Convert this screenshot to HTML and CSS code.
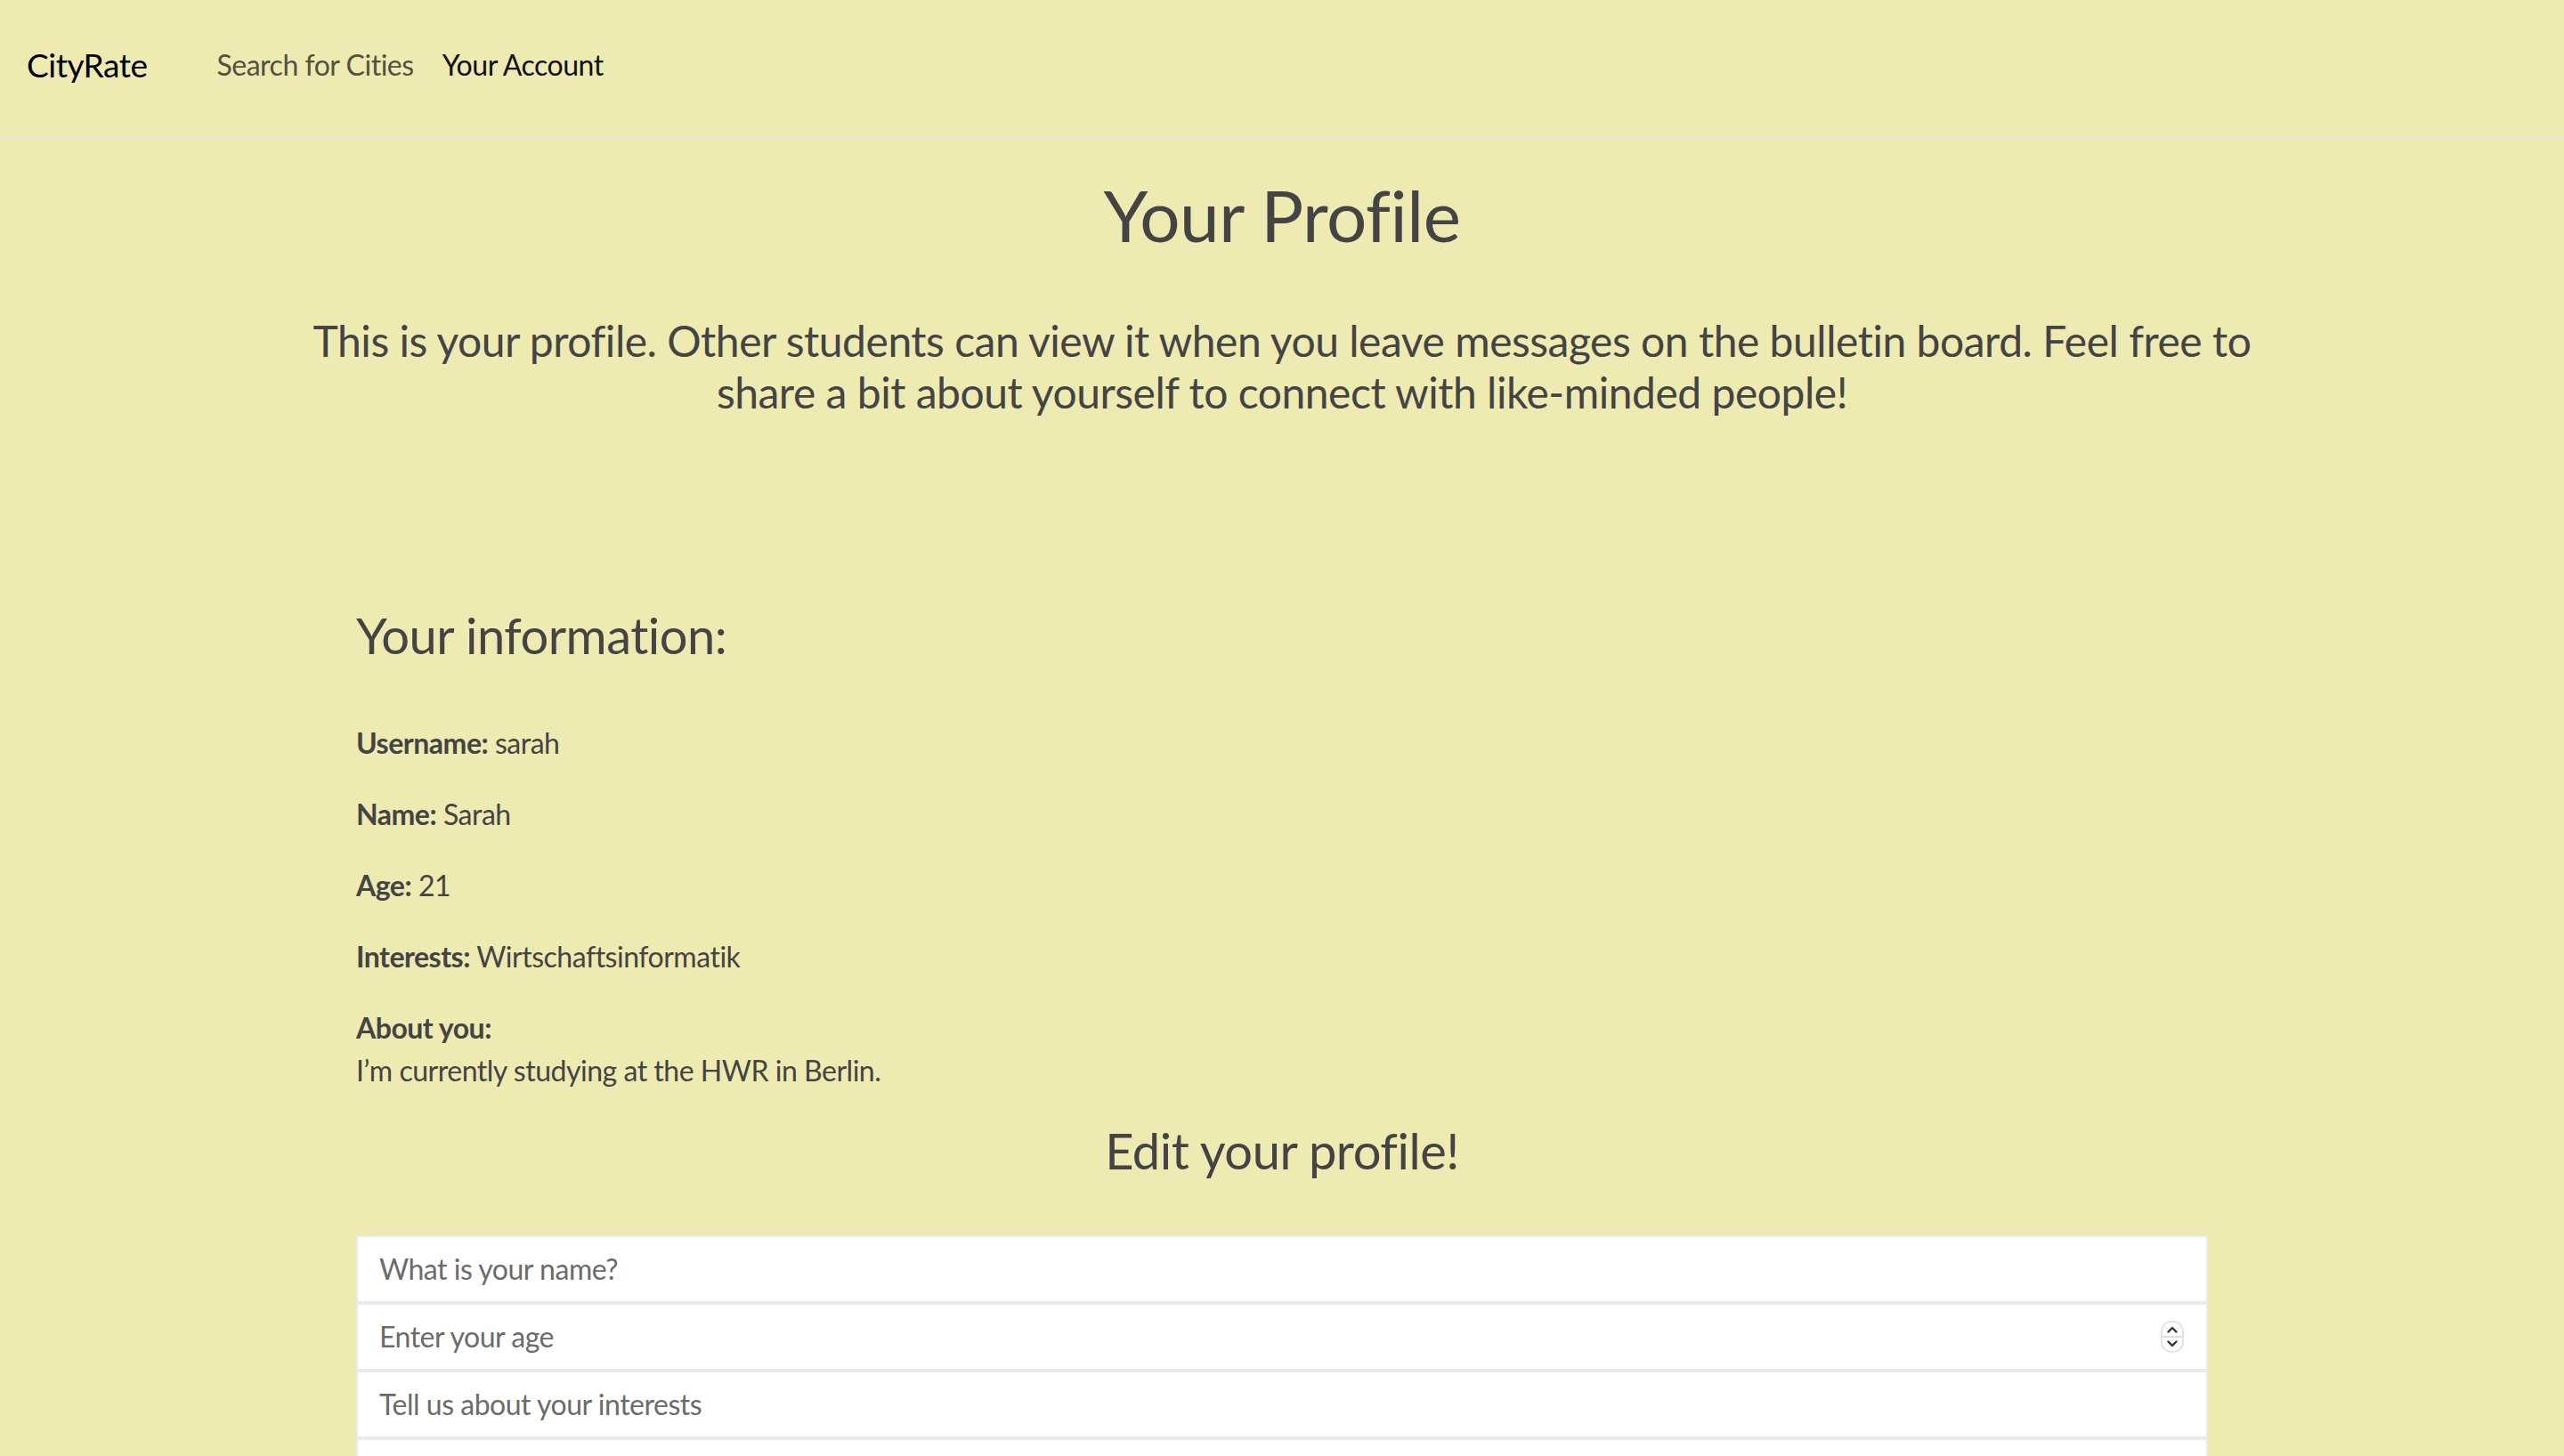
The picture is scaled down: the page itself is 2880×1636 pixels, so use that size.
FILE: index.html
```html
<!DOCTYPE html>
<html lang="en">
<head>
<meta charset="utf-8">
<title>CityRate – Your Profile</title>
<link rel="stylesheet" href="styles.css">
</head>
<body>
<nav class="navbar">
  <a class="brand" href="#">CityRate</a>
  <ul class="nav-links">
    <li><a class="nav-link" href="#">Search for Cities</a></li>
    <li><a class="nav-link active" href="#">Your Account</a></li>
  </ul>
</nav>

<main>
  <section class="intro">
    <h1 class="title">Your Profile</h1>
    <p class="lead">This is your profile. Other students can view it when you leave messages on the bulletin board. Feel free to share a bit about yourself to connect with like-minded people!</p>
  </section>

  <section class="content">
    <h3 class="section-title">Your information:</h3>
    <p class="info"><b>Username:</b> sarah</p>
    <p class="info"><b>Name:</b> Sarah</p>
    <p class="info"><b>Age:</b> 21</p>
    <p class="info"><b>Interests:</b> Wirtschaftsinformatik</p>
    <p class="info"><b>About you:</b><br>I’m currently studying at the HWR in Berlin.</p>

    <h3 class="section-title center">Edit your profile!</h3>

    <form class="edit-form">
      <input class="field" type="text" placeholder="What is your name?">
      <div class="number-wrap">
        <input class="field" type="number" placeholder="Enter your age">
        <svg class="spinner" width="26" height="36" viewBox="0 0 26 36" aria-hidden="true">
          <rect x="1" y="1" width="24" height="34" rx="11" fill="#fff" stroke="#dcdcdc" stroke-width="1.5"/>
          <line x1="1.5" y1="18" x2="24.5" y2="18" stroke="#d6d6d6" stroke-width="1.5"/>
          <path d="M8.5 12.5 L13 8 L17.5 12.5" fill="none" stroke="#333" stroke-width="2.4" stroke-linecap="round" stroke-linejoin="round"/>
          <path d="M8.5 23.5 L13 28 L17.5 23.5" fill="none" stroke="#333" stroke-width="2.4" stroke-linecap="round" stroke-linejoin="round"/>
        </svg>
      </div>
      <input class="field" type="text" placeholder="Tell us about your interests">
      <textarea class="field" rows="3" placeholder="Tell us something about yourself"></textarea>
    </form>
  </section>
</main>
</body>
</html>
```

FILE: styles.css
```css
* {
  box-sizing: border-box;
}

html, body {
  margin: 0;
  padding: 0;
}

body {
  background: #edeab2;
  font-family: Lato, "Liberation Sans", sans-serif;
  font-size: 32px;
  line-height: 1.5;
  letter-spacing: -0.015em;
  color: #444444;
}

/* ---------- navbar ---------- */
.navbar {
  height: 155px;
  display: flex;
  align-items: center;
  padding: 0 0 8px 30px;
  border-bottom: 2px solid #e6e6df;
}

.brand {
  font-size: 37px;
  line-height: 1.5;
  color: #000;
  text-decoration: none;
  margin-right: 62px;
}

.nav-links {
  list-style: none;
  display: flex;
  margin: 0;
  padding: 0;
}

.nav-link {
  display: block;
  padding: 0 16px;
  font-size: 32px;
  color: #53523e;
  text-decoration: none;
}

.nav-link.active {
  color: #111;
}

/* ---------- intro ---------- */
.intro {
  max-width: 2200px;
  margin: 0 auto;
  text-align: center;
}

.title {
  margin: 38px 0 0;
  font-size: 80px;
  font-weight: 400;
  line-height: 1.2;
}

.lead {
  margin: 65px 0 0;
  font-size: 48px;
  line-height: 1.2;
}

/* ---------- content ---------- */
.content {
  max-width: 2080px;
  margin: 0 auto;
  padding-top: 211px;
}

.section-title {
  margin: 0 0 64px;
  font-size: 56px;
  font-weight: 400;
  line-height: 1.2;
}

.section-title.center {
  text-align: center;
  margin-bottom: 61px;
}

.info {
  margin: 0 0 32px;
}

.info b {
  font-weight: 700;
}

/* ---------- form ---------- */
.edit-form {
  display: flex;
  flex-direction: column;
}

.number-wrap {
  position: relative;
}

.field {
  display: block;
  width: 100%;
  height: 76px;
  margin: 0;
  padding: 12px 24px;
  font-family: inherit;
  font-size: 32px;
  line-height: 48px;
  letter-spacing: -0.015em;
  color: #444;
  background: #fff;
  border: 2px solid #ebebeb;
  border-radius: 0;
  outline: none;
}

textarea.field {
  height: 168px;
  resize: none;
}

.field::placeholder {
  color: #6b6b6b;
}

.field[type="number"] {
  -moz-appearance: textfield;
}

.field[type="number"]::-webkit-inner-spin-button,
.field[type="number"]::-webkit-outer-spin-button {
  -webkit-appearance: none;
  margin: 0;
}

.spinner {
  position: absolute;
  right: 27px;
  top: 20px;
}
```
